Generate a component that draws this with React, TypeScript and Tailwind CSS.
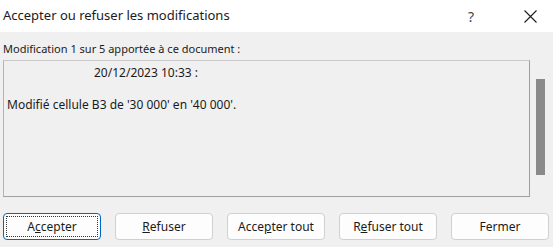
import React from 'react';

const font = { fontFamily: '"Noto Sans", "Open Sans", sans-serif' };

const DialogButton: React.FC<{ primary?: boolean; children: React.ReactNode }> = ({ primary, children }) => (
    <button
        className={
            primary
                ? 'w-[98px] h-[27px] rounded-[4px] border border-[#0067c0] bg-[#fdfdfd] p-[2px] text-[12px] text-[#1b1b1b]'
                : 'w-[98px] h-[27px] rounded-[4px] border border-[#d0d0d0] bg-[#fdfdfd] text-[12px] text-[#1b1b1b]'
        }
    >
        {primary ? (
            <span className="flex h-full w-full items-center justify-center border border-dotted border-[#333]">{children}</span>
        ) : (
            children
        )}
    </button>
);

export default function App() {
    return (
        <div className="w-[553px] h-[247px] bg-[#f0f0f0] flex flex-col" style={font}>
            <div className="h-[32px] bg-white flex items-center justify-between pl-[3px] pr-[16px]">
                <span className="text-[13px] text-[#1b1b1b]">Accepter ou refuser les modifications</span>
                <div className="flex items-center gap-[50px]">
                    <span className="text-[14px] text-[#444]">?</span>
                    <svg width="13" height="13" viewBox="0 0 13 13">
                        <path d="M0.5 0.5 L12.5 12.5 M12.5 0.5 L0.5 12.5" stroke="#1b1b1b" strokeWidth="1.1" />
                    </svg>
                </div>
            </div>
            <div className="px-[3px] pt-[9px] text-[11px] text-[#1b1b1b] leading-[15px]">Modification 1 sur 5 apportée à ce document :</div>
            <div className="flex mt-[4px] pl-[3px]">
                <div className="w-[527px] h-[137px] border border-[#a0a0a0] border-t-[#c8c8c8] border-l-[#b4b4b4] bg-[#f0f0f0] text-[12px] text-[#1b1b1b] leading-[16px]">
                    <div className="pt-[4px] pl-[90px]">20/12/2023 10:33 :</div>
                    <div className="pt-[16px] pl-[3px]">Modifié cellule B3 de '30 000' en '40 000'.</div>
                </div>
                <div className="ml-[6px] mt-[19px] w-[9px] h-[96px] bg-[#8a8a8a]" />
            </div>
            <div className="flex gap-[14px] pl-[3px] mt-[16px]">
                <DialogButton primary>
                    <span>A<u>c</u>cepter</span>
                </DialogButton>
                <DialogButton>
                    <span><u>R</u>efuser</span>
                </DialogButton>
                <DialogButton>
                    <span>Acce<u>p</u>ter tout</span>
                </DialogButton>
                <DialogButton>
                    <span>R<u>e</u>fuser tout</span>
                </DialogButton>
                <DialogButton>Fermer</DialogButton>
            </div>
        </div>
    );
}
